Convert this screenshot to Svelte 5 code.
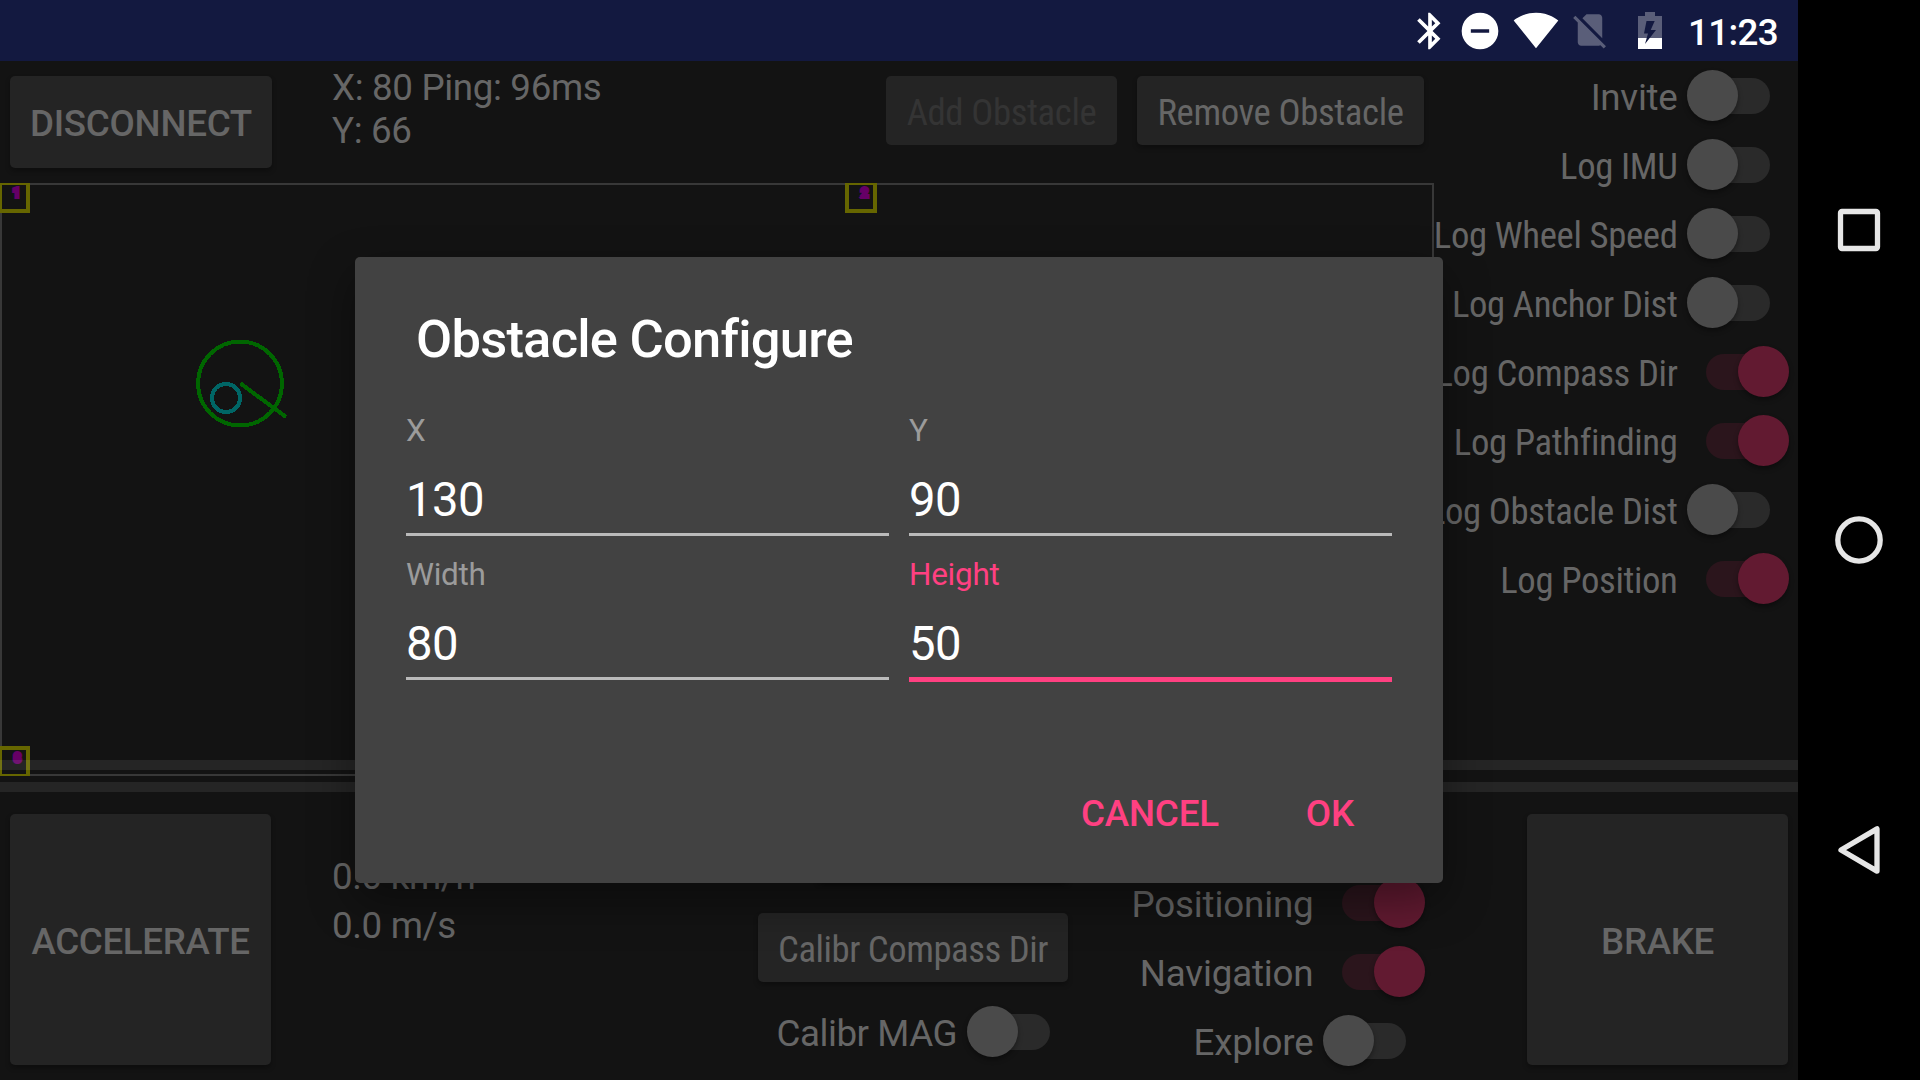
<script>
  const logSwitches = [
    { label: 'Invite', on: false, narrow: false },
    { label: 'Log IMU', on: false, narrow: true },
    { label: 'Log Wheel Speed', on: false, narrow: true },
    { label: 'Log Anchor Dist', on: false, narrow: true },
    { label: 'Log Compass Dir', on: true, narrow: true },
    { label: 'Log Pathfinding', on: true, narrow: true },
    { label: 'Log Obstacle Dist', on: false, narrow: true },
    { label: 'Log Position', on: true, narrow: true },
  ];
  const driveSwitches = [
    { label: 'Positioning', on: true },
    { label: 'Navigation', on: true },
    { label: 'Explore', on: false },
  ];
  const fields = [
    { label: 'X', value: '130' },
    { label: 'Y', value: '90' },
    { label: 'Width', value: '80' },
    { label: 'Height', value: '50', focused: true },
  ];
</script>

{#snippet toggle(item)}
  <div class="toggle">
    <span class="label" class:narrow={item.narrow}>{item.label}</span>
    <span class="switch" class:on={item.on}><i class="track"></i><i class="thumb"></i></span>
  </div>
{/snippet}

<div class="device">
  <div class="screen">
    <header class="status">
      <svg class="bt" viewBox="0 0 24 24"><path d="M17.71 7.71L12 2h-1v7.59L6.41 5 5 6.41 10.59 12 5 17.59 6.41 19 11 14.41V22h1l5.71-5.71-4.3-4.29 4.3-4.29zM13 5.83l1.88 1.88L13 9.59V5.83zm1.88 10.46L13 18.17v-3.76l1.88 1.88z" /></svg>
      <svg class="dnd" viewBox="0 0 24 24"><path fill-rule="evenodd" d="M12 2a10 10 0 1 0 0 20 10 10 0 0 0 0-20zM7 11h10v2H7z" /></svg>
      <svg class="wifi" viewBox="0 0 24 24"><path d="M12.01 21.49L23.64 7c-.45-.34-4.93-4-11.64-4C5.28 3 .81 6.66.36 7l11.63 14.49.01.01.01-.01z" /></svg>
      <svg class="sim" viewBox="0 0 24 24"><path d="M18.99 5c0-1.1-.89-2-1.99-2h-7L7.66 5.34 19 16.68 18.99 5zM3.65 3.88L2.38 5.15 5 7.77V19c0 1.1.9 2 2 2h10.01c.35 0 .67-.1.96-.26l1.88 1.88 1.27-1.27L3.65 3.88z" /></svg>
      <svg class="battery" viewBox="0 0 24 37">
        <path class="dim" d="M7 0h10v4h7v22H0V4h7z" />
        <path d="M0 26h24v11H0z" />
        <path class="bolt" d="M8.500 9h8.200l-4 9H18L7 32l3-10.500H6z" />
      </svg>
      <span class="clock">11:23</span>
    </header>

    <main class="upper">
      <section class="left">
        <div class="toolbar">
          <button class="btn strong disconnect">DISCONNECT</button>
          <div class="coords">X: 80 Ping: 96ms<br />Y: 66</div>
          <button class="btn add" disabled><span class="narrow">Add Obstacle</span></button>
          <button class="btn remove"><span class="narrow">Remove Obstacle</span></button>
        </div>
        <svg class="map" viewBox="0 0 1434 593">
          <rect class="frame" x="1" y="1" width="1432" height="591" />
          <g class="anchor"><rect x="0" y="0" width="28" height="28" /><rect x="847" y="0" width="28" height="28" /><rect x="0" y="565" width="28" height="28" /></g>
          <g class="num"><text x="13" y="14">1</text><text x="861" y="14">2</text><text x="14" y="579">3</text></g>
          <circle class="robot" cx="240" cy="200.500" r="42" />
          <path class="robot" d="M240.500 200.500L286 234" />
          <circle class="target" cx="226" cy="215" r="14" />
        </svg>
      </section>
      <section class="logs">
        {#each logSwitches as item}{@render toggle(item)}{/each}
      </section>
      <div class="dividers"><i></i><i></i></div>
    </main>

    <footer class="lower">
      <button class="btn strong pedal">ACCELERATE</button>
      <div class="speed"><div>0.0 km/h</div><div>0.0 m/s</div></div>
      <div class="calib">
        <span class="btn spare"></span>
        <button class="btn compass"><span class="narrow">Calibr Compass Dir</span></button>
        {@render toggle({ label: 'Calibr MAG', on: false })}
      </div>
      <div class="drive">
        {#each driveSwitches as item}{@render toggle(item)}{/each}
      </div>
      <button class="btn strong pedal">BRAKE</button>
    </footer>

    <div class="dialog" role="dialog" aria-label="Obstacle Configure">
      <h1>Obstacle Configure</h1>
      <div class="fields">
        {#each fields as f}
          <div class="field" class:focused={f.focused}>
            <div class="name">{f.label}</div>
            <div class="value">{f.value}</div>
          </div>
        {/each}
      </div>
      <div class="actions"><span>CANCEL</span><span>OK</span></div>
    </div>
  </div>

  <nav class="nav">
    <svg viewBox="0 0 48 48"><rect x="5.500" y="5.500" width="37" height="37" rx="1.500" /></svg>
    <svg viewBox="0 0 48 48"><circle cx="24" cy="24" r="21.200" /></svg>
    <svg viewBox="0 0 48 48"><path d="M6 24L42 2.900V45.100z" /></svg>
  </nav>
</div>

<style>
  :global(body) { background: #000; overflow: hidden; }
  .device {
    width: 1920px; height: 1080px; display: grid; grid-template-columns: 1798px 122px;
    background: #000; color: #666; font: 36.75px Roboto, sans-serif; line-height: 43px; letter-spacing: -0.28px;
  }
  .screen { position: relative; display: flex; flex-direction: column; background: #131313; overflow: hidden; }

  .status { height: 61px; background: #131940; display: flex; align-items: flex-start; justify-content: flex-end; padding-right: 20px; box-sizing: border-box; fill: #fff; }
  .status svg { flex: none; }
  .bt, .dnd { width: 44px; height: 44px; margin-top: 9px; }
  .dnd { margin-left: 6px; }
  .wifi { width: 46px; height: 46px; margin: 7px 0 0 11px; }
  .sim { width: 42px; height: 42px; margin: 9px 0 0 10px; fill: #5a5e79; }
  .battery { width: 24px; height: 37px; margin: 12px 0 0 27px; }
  .battery .dim { fill: #5a5e79; }
  .battery .bolt { fill: #131940; }
  .clock { width: 90px; margin: 11px 0 0 26px; color: #fff; font-weight: 500; white-space: nowrap; letter-spacing: -0.65px; }

  .upper { position: relative; height: 715px; display: grid; grid-template-columns: 1434px 364px; }
  .left { display: flex; flex-direction: column; min-width: 0; }
  .toolbar { height: 122px; display: flex; align-items: flex-start; box-sizing: border-box; padding: 0 10px; }
  .btn {
    display: flex; align-items: center; justify-content: center; box-sizing: border-box; flex: none;
    border: 0; border-radius: 5px; background: #242424; color: #666; font: inherit; letter-spacing: inherit; padding: 3px 0 0;
    white-space: nowrap; box-shadow: 0 3px 5px rgba(0, 0, 0, 0.3);
  }
  .strong { font-weight: 500; }
  .disconnect { width: 262px; height: 92px; margin-top: 15px; }
  .coords { width: 554px; margin: 5px 0 0 60px; line-height: 43px; white-space: nowrap; letter-spacing: -0.35px; }
  .add { width: 231px; height: 69px; margin-top: 15px; color: #343434; box-shadow: none; }
  .remove { width: 287px; height: 69px; margin: 15px 0 0 20px; }
  .narrow { font-stretch: condensed; font-family: 'Roboto Condensed', Roboto, sans-serif; letter-spacing: -0.38px; }
  .compass .narrow { letter-spacing: -0.47px; }

  .map { width: 1434px; height: 593px; display: block; fill: none; shape-rendering: crispEdges; }
  .frame { stroke: #383838; stroke-width: 2; }
  .anchor { stroke: #660; stroke-width: 4; }
  .num { font-size: 12.500px; letter-spacing: 0; stroke: #606; stroke-width: 4; fill: #606; }
  .robot { stroke: #060; stroke-width: 4; }
  .target { stroke: #066; stroke-width: 4; }

  .logs, .drive { display: flex; flex-direction: column; }
  .toggle { height: 69px; display: flex; align-items: center; justify-content: flex-end; gap: 9.500px; padding-right: 9px; white-space: nowrap; }
  .label { padding-top: 4px; flex: none; }
  .switch { position: relative; width: 102px; height: 52px; flex: none; display: flex; align-items: center; justify-content: center; }
  .track { width: 64px; height: 36px; border-radius: 18px; background: #2a2a2a; }
  .thumb { position: absolute; left: 0; top: 0; width: 51px; height: 51px; border-radius: 50%; background: #4a4a4a; box-shadow: 0 3px 5px rgba(0, 0, 0, 0.35); }
  .on .track { background: #2b151c; }
  .on .thumb { left: 51px; background: #621a31; }
  .dividers { position: absolute; left: 0; right: 0; top: 699px; display: flex; flex-direction: column; gap: 12px; }
  .dividers i { height: 10px; background: rgba(255, 255, 255, 0.078); }

  .lower { flex: 1; display: flex; align-items: flex-start; padding: 38px 10px 0; }
  .pedal { width: 261px; height: 251px; letter-spacing: -0.38px; }
  .speed { width: 426px; margin: 41px 0 0 61px; display: flex; flex-direction: column; gap: 6px; flex: none; letter-spacing: -0.36px; }
  .calib { width: 310px; flex: none; display: flex; flex-direction: column; align-items: flex-end; }
  .calib .toggle { padding-right: 0; margin: 15px -1px 0 0; letter-spacing: -0.48px; gap: 10px; }
  .spare { width: 250px; height: 69px; }
  .compass { width: 310px; height: 69px; margin-top: 30px; }
  .drive { width: 357px; flex: none; margin-top: 54px; }
  .drive .toggle { padding-right: 0; letter-spacing: -0.17px; }
  .lower .pedal:last-child { margin-left: 102px; }

  .dialog {
    position: absolute; left: 355px; top: 257px; width: 1088px; height: 626px; box-sizing: border-box; padding: 0 51px;
    background: #424242; border-radius: 5px; box-shadow: 0 18px 46px rgba(0, 0, 0, 0.4);
    display: flex; flex-direction: column;
  }
  h1 { margin: 51px 0 0 10px; font-size: 52.500px; line-height: 62px; font-weight: 500; color: #fff; letter-spacing: -0.77px; }
  .fields { display: grid; grid-template-columns: 483px 483px; column-gap: 20px; grid-auto-rows: 144px; margin-top: 42px; color: #fff; }
  .name { font-size: 31.500px; line-height: 37px; color: #9b9b9b; }
  .value { font-size: 47.250px; line-height: 55px; margin-top: 24px; height: 60px; border-bottom: 3px solid #bababa; letter-spacing: -0.5px; }
  .field { height: 144px; }
  .focused .name { color: #ff4081; }
  .focused .value { border-bottom: 5px solid #ff4081; }
  .actions { display: flex; justify-content: flex-end; gap: 87px; padding: 92px 38px 0 0; color: #ff4081; font-weight: 500; letter-spacing: -0.2px; }

  .nav { display: flex; flex-direction: column; align-items: center; padding: 206px 0 0; gap: 262px; }
  .nav svg { width: 48px; height: 48px; fill: none; stroke: #e6e6e6; stroke-width: 5.300; stroke-linejoin: round; }
</style>
